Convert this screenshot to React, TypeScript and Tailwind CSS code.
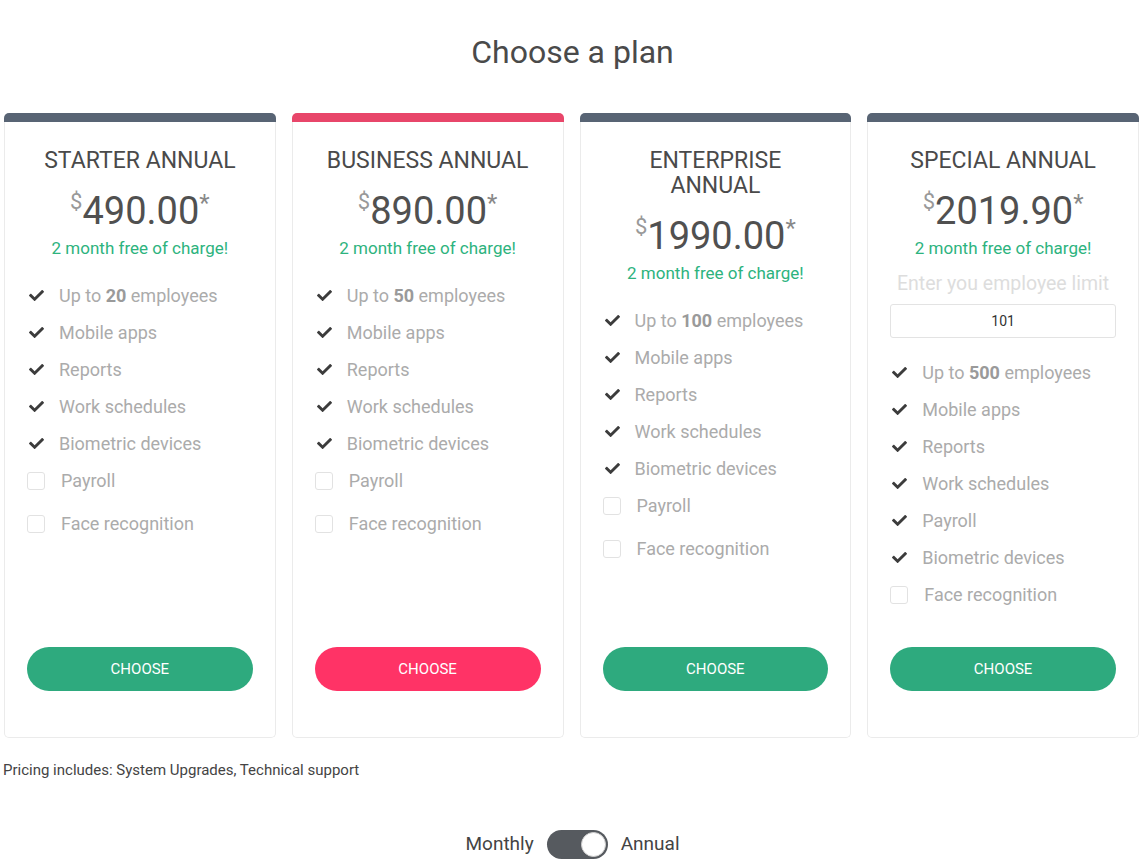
import React from "react";
import { FaCheck } from "react-icons/fa";

type Feature = { label: React.ReactNode; on: boolean };

type Plan = {
  name: string;
  price: string;
  bar: string;
  btn: string;
  features: Feature[];
  limit?: boolean;
};

const up = (n: string) => (
  <>
    Up to <b className="font-bold text-[#9a9a9a]">{n}</b> employees
  </>
);

const std = (n: string, payroll: boolean): Feature[] => [
  { label: up(n), on: true },
  { label: "Mobile apps", on: true },
  { label: "Reports", on: true },
  { label: "Work schedules", on: true },
  { label: "Biometric devices", on: true },
  { label: "Payroll", on: payroll },
  { label: "Face recognition", on: false },
];

const plans: Plan[] = [
  { name: "STARTER ANNUAL", price: "490.00", bar: "bg-[#586474]", btn: "bg-[#2eaa7e]", features: std("20", false) },
  { name: "BUSINESS ANNUAL", price: "890.00", bar: "bg-[#e8466a]", btn: "bg-[#ff3366]", features: std("50", false) },
  { name: "ENTERPRISE ANNUAL", price: "1990.00", bar: "bg-[#586474]", btn: "bg-[#2eaa7e]", features: std("100", false) },
  {
    name: "SPECIAL ANNUAL",
    price: "2019.90",
    bar: "bg-[#586474]",
    btn: "bg-[#2eaa7e]",
    limit: true,
    features: [
      { label: up("500"), on: true },
      { label: "Mobile apps", on: true },
      { label: "Reports", on: true },
      { label: "Work schedules", on: true },
      { label: "Payroll", on: true },
      { label: "Biometric devices", on: true },
      { label: "Face recognition", on: false },
    ],
  },
];

function Card({ p }: { p: Plan }) {
  return (
    <div className="flex flex-col">
      <div className={`h-[9px] rounded-t-[5px] ${p.bar}`} />
      <div className="flex flex-1 flex-col rounded-b-[5px] border border-t-0 border-[#ebebeb] px-[22px] pb-[46px] pt-[26px]">
        <div className="px-[10px] text-center text-[23px] leading-[25px] text-[#4a4a4a]">{p.name}</div>
        <div className="mt-[16px] flex items-start justify-center">
          <span className="mt-[2px] text-[22px] leading-none text-[#999]">$</span>
          <span className="text-[38px] leading-[45px] text-[#505050]">{p.price}</span>
          <span className="mt-[2px] text-[24px] leading-none text-[#888]">*</span>
        </div>
        <div className="mt-[2px] text-center text-[17px] leading-[24px] text-[#2db37e]">2 month free of charge!</div>
        {p.limit && (
          <>
            <div className="mt-[12px] text-center text-[19.5px] leading-[24px] text-[#dddddd]">Enter you employee limit</div>
            <div className="mt-[8px] flex h-[34px] items-center justify-center rounded-[3px] border border-[#e3e3e3] text-[14px] text-[#333]">
              101
            </div>
          </>
        )}
        <div className={`flex flex-col ${p.limit ? "mt-[16px]" : "mt-[17px]"}`}>
          {p.features.map((f, i) =>
            f.on ? (
              <div key={i} className="flex h-[37px] items-center text-[18px] text-[#ababab]">
                <span className="ml-[2px] flex w-[16px] text-[#3c3c3c]">
                  <FaCheck size={15} />
                </span>
                <span className="ml-[14px]">{f.label}</span>
              </div>
            ) : (
              <div key={i} className="mb-[6px] flex h-[37px] items-center text-[18px] text-[#ababab]">
                <span className="h-[18px] w-[18px] rounded-[3px] border border-[#e2e2e2]" />
                <span className="ml-[16px]">{f.label}</span>
              </div>
            )
          )}
        </div>
        <div className="mt-auto pt-[28px]">
          <button
            className={`flex h-[44px] w-full items-center justify-center rounded-full text-[15px] text-white ${p.btn}`}
          >
            CHOOSE
          </button>
        </div>
      </div>
    </div>
  );
}

export default function App() {
  return (
    <div className="min-h-[866px] bg-white pt-[32px]" style={{ fontFamily: "Roboto, 'Noto Sans', sans-serif" }}>
      <h1 className="text-center text-[32px] leading-[40px] text-[#4a4a4a]">Choose a plan</h1>
      <div className="ml-[4px] mt-[41px] grid w-[1135px] grid-cols-4 gap-[16px]">
        {plans.map((p) => (
          <Card key={p.name} p={p} />
        ))}
      </div>
      <div className="ml-[3px] mt-[22px] text-[15px] leading-[20px] text-[#444]">
        Pricing includes: System Upgrades, Technical support
      </div>
      <div className="mt-[50px] flex items-center justify-center text-[19px] text-[#444]">
        <span>Monthly</span>
        <div className="mx-[13px] flex h-[29px] w-[61px] items-center justify-end rounded-full bg-[#565a5f] pr-[2px]">
          <div className="h-[25px] w-[25px] rounded-full border border-[#cfcfcf] bg-white" />
        </div>
        <span>Annual</span>
      </div>
    </div>
  );
}
